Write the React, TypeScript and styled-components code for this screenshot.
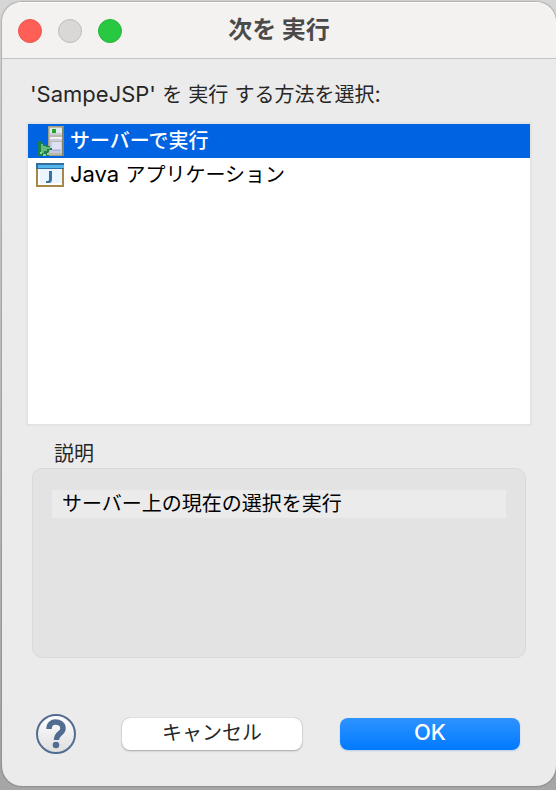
import React, { useState } from "react";
import styled, { createGlobalStyle, css } from "styled-components";

const GlobalStyle = createGlobalStyle`
  * { box-sizing: border-box; }
  body {
    margin: 0;
    background: linear-gradient(#d6d6d6, #a6a6a6);
    font-family: Inter, "Noto Sans CJK JP", sans-serif;
    font-size: 20px;
    line-height: 28px;
    color: #262626;
  }
  button { font: inherit; border: 0; padding: 0; margin: 0; }
`;

const Window = styled.main`
  display: flex;
  flex-direction: column;
  min-height: calc(100vh - 6px);
  margin: 2px 0 4px 2px;
  background: #ebebeb;
  border-radius: 20px;
  overflow: hidden;
  box-shadow: 0 0 2px #555;
`;

const TitleBar = styled.header`
  display: grid;
  grid-template-columns: 1fr auto 1fr;
  align-items: center;
  height: 57px;
  padding: 0 16px;
  background: #f3f2f1;
  border-top: 1px solid #fff;
  border-bottom: 1px solid #c3c3c3;
`;

const WindowControls = styled.div`
  display: flex;
  gap: 16px;
`;

const Light = styled.button<{ $fill: string; $edge: string }>`
  width: 24px;
  height: 24px;
  border-radius: 50%;
  background: ${(p) => p.$fill};
  border: 1px solid ${(p) => p.$edge};
`;

const Title = styled.h1`
  margin: 0;
  padding-bottom: 2px;
  font-size: 24px;
  line-height: 32px;
  font-weight: 700;
  color: #4b4a4a;
`;

const Body = styled.div`
  display: flex;
  flex: 1;
  flex-direction: column;
  padding: 22px 24px 32px;
`;

const Latin = styled.span`
  font-size: 22px;
  line-height: 20px;
`;

const Prompt = styled.p`
  margin: 0 6px 13px 4px;
`;

const Options = styled.div`
  height: 304px;
  background: #fff;
  border: 2px solid #e3e3e3;
`;

const Option = styled.button<{ $selected: boolean }>`
  display: flex;
  align-items: center;
  gap: 6px;
  width: 100%;
  height: 34px;
  padding: 0 8px;
  text-align: left;
  background: #fff;
  color: #000;
  ${(p) =>
    p.$selected &&
    css`
      background: #0063e1;
      color: #fff;
      font-weight: 500;
    `}
`;

const Group = styled.fieldset`
  min-width: 0;
  margin: 14px 6px 0;
  padding: 0;
  border: 0;
`;

const Legend = styled.legend`
  padding: 0 22px;
`;

const Panel = styled.div`
  height: 190px;
  padding: 21px 19px;
  background: #e3e3e3;
  border: 1px solid #d9d9d9;
  border-radius: 10px;
`;

const Description = styled.p`
  margin: 0;
  padding: 0 10px;
  background: #ebebeb;
  color: #000;
`;

const Footer = styled.footer`
  display: grid;
  grid-template-columns: 48px 1fr 1fr;
  align-items: center;
  column-gap: 38px;
  margin-top: auto;
  padding: 0 12px 0 10px;
`;

const HelpButton = styled.button`
  display: flex;
  width: 40px;
  height: 40px;
  background: none;
`;

const PushButton = styled.button<{ $primary?: boolean }>`
  height: 32px;
  padding-bottom: 2px;
  border-radius: 8px;
  background: #fff;
  color: #262626;
  box-shadow: 0 0 1px #999, 0 1px 2px #aaa;
  ${(p) =>
    p.$primary &&
    css`
      background: linear-gradient(#2f93ff, #007aff);
      color: #fff;
      font-weight: 500;
      box-shadow: 0 1px 2px #b9cdea;
    `}
`;

const Icon = styled.svg`
  display: block;
  flex: none;
`;

const ServerIcon = () => (
  <Icon width="28" height="32" viewBox="0 0 28 32" aria-hidden="true">
    <rect x="12" y="1" width="16" height="30" fill="#a19f86" />
    <rect x="13" y="2" width="13" height="28" fill="#bcbaa5" />
    <rect x="26" y="2" width="2" height="29" fill="#85866f" />
    <rect x="14" y="3" width="12" height="7" fill="#dfe9e6" />
    <rect x="14" y="8" width="12" height="2" fill="#c5cedb" />
    <rect x="16" y="4" width="4" height="4" fill="#22a52e" />
    <rect x="14" y="12" width="12" height="4" fill="#eef0fa" />
    <rect x="14" y="14" width="12" height="2" fill="#c8cbe2" />
    <rect x="14" y="17" width="12" height="11" fill="#c3c9e4" />
    <rect x="16" y="17" width="9" height="7" fill="#dde1f3" />
    <rect x="16" y="25" width="8" height="1" fill="#a9b1d4" />
    <path d="M2 16h3v2h3v2h3v1h3v2h2v2h-3v2h-2v2h2v2h-3v-2H7v2H2z" fill="#1c8049" />
    <path d="M5 19h2v2h3v1h4v2h-3v2H8v2H5z" fill="#66b87b" />
    <path d="M4 27h2v2H4zM7 29h3v2H7zM11 28h2v2h-2z" fill="#9bcbaa" />
  </Icon>
);

const JavaIcon = () => (
  <Icon width="28" height="24" viewBox="0 0 28 24" aria-hidden="true">
    <rect width="28" height="24" fill="#a88649" />
    <rect x="2" y="6" width="24" height="16" fill="#e9f6ff" />
    <path d="M2 6h2v14h22v2H2z" fill="#fff" />
    <rect width="28" height="6" fill="#326f9e" />
    <rect x="2" y="2" width="26" height="3" fill="#55b5ed" />
    <path d="M13 8v8q0 2-1 2h-2v2h3q3 0 3-4V8z" fill="#3b719d" />
  </Icon>
);

const HelpIcon = () => (
  <Icon width="40" height="40" viewBox="0 0 40 40" aria-hidden="true">
    <defs>
      <linearGradient id="help-face" x2="0" y2="1">
        <stop stopColor="#fff" />
        <stop offset="1" stopColor="#dedede" />
      </linearGradient>
    </defs>
    <circle cx="20" cy="20" r="19" fill="url(#help-face)" stroke="#526b91" strokeWidth="2" />
    <path
      d="M13 15C13 10 16 8 19.500 8S27 10 27 14.500C27 19.500 20.500 19 20.500 26"
      fill="none"
      stroke="#526b91"
      strokeWidth="5.500"
    />
    <circle cx="20" cy="31" r="3.300" fill="#526b91" />
  </Icon>
);

const choices = [
  { id: "server", label: "サーバーで実行", icon: <ServerIcon />, description: "サーバー上の現在の選択を実行" },
  {
    id: "java",
    label: (
      <span>
        <Latin>Java </Latin>アプリケーション
      </span>
    ),
    icon: <JavaIcon />,
    description: "Java アプリケーションを実行",
  },
];

export default function App() {
  const [selected, setSelected] = useState(0);
  return (
    <>
      <GlobalStyle />
      <Window>
        <TitleBar>
          <WindowControls>
            <Light $fill="#ff5f57" $edge="#e9564e" aria-label="閉じる" />
            <Light $fill="#d9d8d7" $edge="#bdbdbe" aria-label="しまう" disabled />
            <Light $fill="#28c840" $edge="#24b53a" aria-label="拡大" />
          </WindowControls>
          <Title>次を 実行</Title>
        </TitleBar>
        <Body>
          <Prompt id="prompt">
            <Latin>'SampeJSP' </Latin>を<Latin> </Latin>実行<Latin> </Latin>する方法を選択<Latin>:</Latin>
          </Prompt>
          <Options role="listbox" aria-labelledby="prompt">
            {choices.map((choice, i) => (
              <Option
                key={choice.id}
                role="option"
                aria-selected={i === selected}
                $selected={i === selected}
                onClick={() => setSelected(i)}
              >
                {choice.icon}
                {choice.label}
              </Option>
            ))}
          </Options>
          <Group>
            <Legend>説明</Legend>
            <Panel>
              <Description>{choices[selected].description}</Description>
            </Panel>
          </Group>
          <Footer>
            <HelpButton aria-label="ヘルプ">
              <HelpIcon />
            </HelpButton>
            <PushButton>キャンセル</PushButton>
            <PushButton $primary>
              <Latin>OK</Latin>
            </PushButton>
          </Footer>
        </Body>
      </Window>
    </>
  );
}
